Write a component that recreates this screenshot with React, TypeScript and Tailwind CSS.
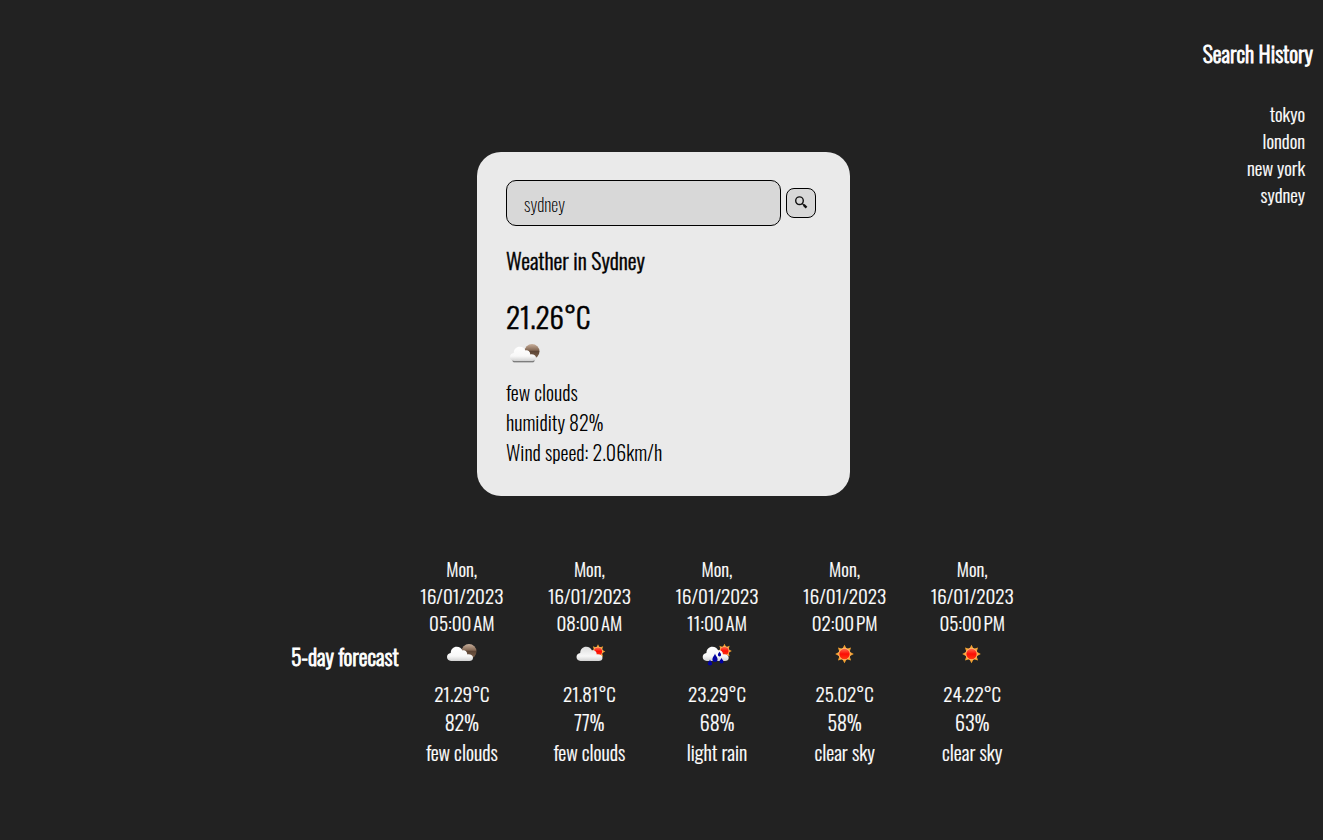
import { useId, useState } from "react";

type Sky = "clouds-night" | "clouds-day" | "rain" | "clear";

const HISTORY = ["tokyo", "london", "new york", "sydney"];

const FORECAST: { time: string; sky: Sky; temp: string; humidity: string; text: string }[] = [
  { time: "05:00\u202fAM", sky: "clouds-night", temp: "21.29°C", humidity: "82%", text: "few clouds" },
  { time: "08:00\u202fAM", sky: "clouds-day", temp: "21.81°C", humidity: "77%", text: "few clouds" },
  { time: "11:00\u202fAM", sky: "rain", temp: "23.29°C", humidity: "68%", text: "light rain" },
  { time: "02:00\u202fPM", sky: "clear", temp: "25.02°C", humidity: "58%", text: "clear sky" },
  { time: "05:00\u202fPM", sky: "clear", temp: "24.22°C", humidity: "63%", text: "clear sky" },
];

function starPoints(cx: number, cy: number, outer: number, inner: number) {
  return Array.from({ length: 16 }, (_, i) => {
    const r = i % 2 === 0 ? outer : inner;
    const a = (i * Math.PI) / 8;
    return `${(cx + r * Math.sin(a)).toFixed(2)},${(cy - r * Math.cos(a)).toFixed(2)}`;
  }).join(" ");
}

function Sun({ cx, cy, r, fill }: { cx: number; cy: number; r: number; fill: string }) {
  return (
    <g>
      <polygon points={starPoints(cx, cy, r, r * 0.6)} fill="#f2a030" />
      <circle cx={cx} cy={cy} r={r * 0.66} fill="#ffb868" />
      <circle cx={cx} cy={cy} r={r * 0.56} fill={fill} />
    </g>
  );
}

function SkyIcon({ sky, shadow = false }: { sky: Sky; shadow?: boolean }) {
  const id = useId();
  const sun = `url(#${id}s)`;
  const cloudX = sky === "clouds-day" ? 2.5 : sky === "rain" ? 0.7 : 0;
  return (
    <svg viewBox="0 0 50 50" className="block size-[50px]" aria-hidden="true">
      <defs>
        <linearGradient id={`${id}c`} x1="0" y1="0" x2="0" y2="1">
          <stop offset="0" stopColor={sky === "clouds-day" ? "#dedede" : "#fff"} />
          <stop offset="0.65" stopColor="#f8f8f8" />
          <stop offset="1" stopColor="#d2d2d2" />
        </linearGradient>
        <linearGradient id={`${id}s`} x1="0" y1="0" x2="0" y2="1">
          <stop offset="0" stopColor="#ff6a4a" />
          <stop offset="0.5" stopColor="#fb0d05" />
          <stop offset="1" stopColor="#ff3a10" />
        </linearGradient>
        <linearGradient id={`${id}m`} x1="0" y1="0" x2="0" y2="1">
          <stop offset="0" stopColor="#c9b09c" />
          <stop offset="0.4" stopColor="#866a56" />
          <stop offset="0.5" stopColor="#5d4535" />
          <stop offset="1" stopColor="#806550" />
        </linearGradient>
        <linearGradient id={`${id}d`} x1="0" y1="0" x2="0" y2="1">
          <stop offset="0.4" stopColor="#555" />
          <stop offset="1" stopColor="#999" />
        </linearGradient>
      </defs>
      {sky === "clear" && <Sun cx={24.5} cy={25} r={9.3} fill={sun} />}
      {sky === "clouds-night" && <circle cx="32" cy="22.5" r="7.5" fill={`url(#${id}m)`} />}
      {sky === "clouds-day" && <Sun cx={34} cy={22.5} r={7.3} fill={sun} />}
      {sky === "rain" && <Sun cx={32.5} cy={22} r={7.3} fill={sun} />}
      {shadow && <rect x="12.5" y="29.5" width="22" height="4" rx="1.7" fill={`url(#${id}d)`} />}
      {sky !== "clear" && (
        <path
          transform={`translate(${cloudX} 0)`}
          d="M14 32c-2.500 0-4-1.600-4-3.900 0-2.300 1.500-3.900 3.700-4.200 .2-3.800 2.600-6.100 6-6.100 2.800 0 4.800 1.400 5.800 3.800 1.700-.9 4.600.4 4.800 3.800 3.300-.4 5.700 1 5.700 3.300 0 2.200-1.500 3.300-3.700 3.300Z"
          fill={`url(#${id}c)`}
        />
      )}
      {sky === "rain" && (
        <g fill="#0202a0">
          <path d="M23 24.500c.3 2.200 2.600 3.400 2.600 5.800a2.600 2.700 0 0 1-5.200 0c0-2.400 2.300-3.600 2.600-5.800Z" />
          <path d="M27.500 22.500c.2 1.200 1.600 1.900 1.600 3.200a1.600 1.700 0 0 1-3.200 0c0-1.300 1.400-2 1.600-3.200Z" />
          <path d="M18 30.500c.2 1.500 2.200 2.400 2.200 4a2.200 2 0 0 1-4.400 0c0-1.600 2-2.500 2.200-4Z" />
          <path d="M29.500 28.800c.2 1.400 2 2.400 2 3.800a2 2 0 0 1-4 0c0-1.400 1.800-2.400 2-3.800Z" />
        </g>
      )}
    </svg>
  );
}

function SearchIcon() {
  return (
    <svg viewBox="0 0 14 14" className="block size-3.5" aria-hidden="true">
      <circle cx="5.5" cy="4.7" r="3.8" fill="none" stroke="#111" strokeWidth="1.4" />
      <path d="m8.300 7.500 1.600 1.600" stroke="#111" strokeWidth="1.2" />
      <path d="m9.700 8.900 2.800 2.800" stroke="#111" strokeWidth="2.4" />
    </svg>
  );
}

export default function App() {
  const [city, setCity] = useState("sydney");

  return (
    <div className="min-h-screen bg-[#222] pb-10 pl-1 font-['Oswald','Liberation_Sans_Narrow','Liberation_Sans',sans-serif] text-[19px] font-light text-white">
      <div className="grid grid-cols-[1fr_373px_1fr] items-start">
        <main className="col-start-2 mt-[152px] rounded-3xl bg-[#eaeaea] px-[29px] pt-7 pb-[29px] text-black">
          <form className="flex items-center gap-[5px]" onSubmit={(e) => e.preventDefault()}>
            <input
              type="text"
              aria-label="City"
              value={city}
              onChange={(e) => setCity(e.target.value)}
              className="h-[46px] w-[275px] rounded-[10px] border border-black bg-[#d8d8d8] px-[17px] pt-0.5 text-lg font-extralight text-black outline-none"
            />
            <button
              type="submit"
              aria-label="Search"
              className="flex size-[30px] items-center justify-center rounded-lg border border-black bg-[#d8d8d8]"
            >
              <SearchIcon />
            </button>
          </form>
          <h2 className="mt-5 text-[22px] leading-7 [-webkit-text-stroke:0.02em]">Weather in Sydney</h2>
          <p className="mt-[18px] text-[29px] leading-12 [-webkit-text-stroke:0.02em]">21.26°C</p>
          <div className="-mt-[11px] -ml-1.5">
            <SkyIcon sky="clouds-night" shadow />
          </div>
          <div className="-mt-0.5 text-xl leading-[30px]">
            <p>few clouds</p>
            <p>humidity 82%</p>
            <p>Wind speed: 2.06km/h</p>
          </div>
        </main>
        <aside className="pt-9 pr-2.5 text-right">
          <h2 className="text-[22px] leading-[34px] [-webkit-text-stroke:0.04em]">Search History</h2>
          <ul className="mt-[30px] pr-2 leading-[27px] [-webkit-text-stroke:0.01em]">
            {HISTORY.map((name) => (
              <li key={name}>{name}</li>
            ))}
          </ul>
        </aside>
      </div>
      <section className="mt-[59px] flex items-center justify-center">
        <h2 className="w-[107px] pb-3 text-[22px] leading-9 whitespace-nowrap [-webkit-text-stroke:0.04em]">
          5-day forecast
        </h2>
        <ul className="grid w-[638px] grid-cols-5 text-center [-webkit-text-stroke:0.01em]">
          {FORECAST.map((day, i) => (
            <li key={i} className="flex flex-col items-center">
              <p className="leading-[27px]">Mon,</p>
              <p className="leading-[27px]">16/01/2023</p>
              <p className="leading-[27px]">{day.time}</p>
              <div className="-mt-[7px] -mb-px">
                <SkyIcon sky={day.sky} />
              </div>
              <p className="leading-[30px]">{day.temp}</p>
              <p className="text-xl leading-7">{day.humidity}</p>
              <p className="text-xl leading-8">{day.text}</p>
            </li>
          ))}
        </ul>
      </section>
    </div>
  );
}
